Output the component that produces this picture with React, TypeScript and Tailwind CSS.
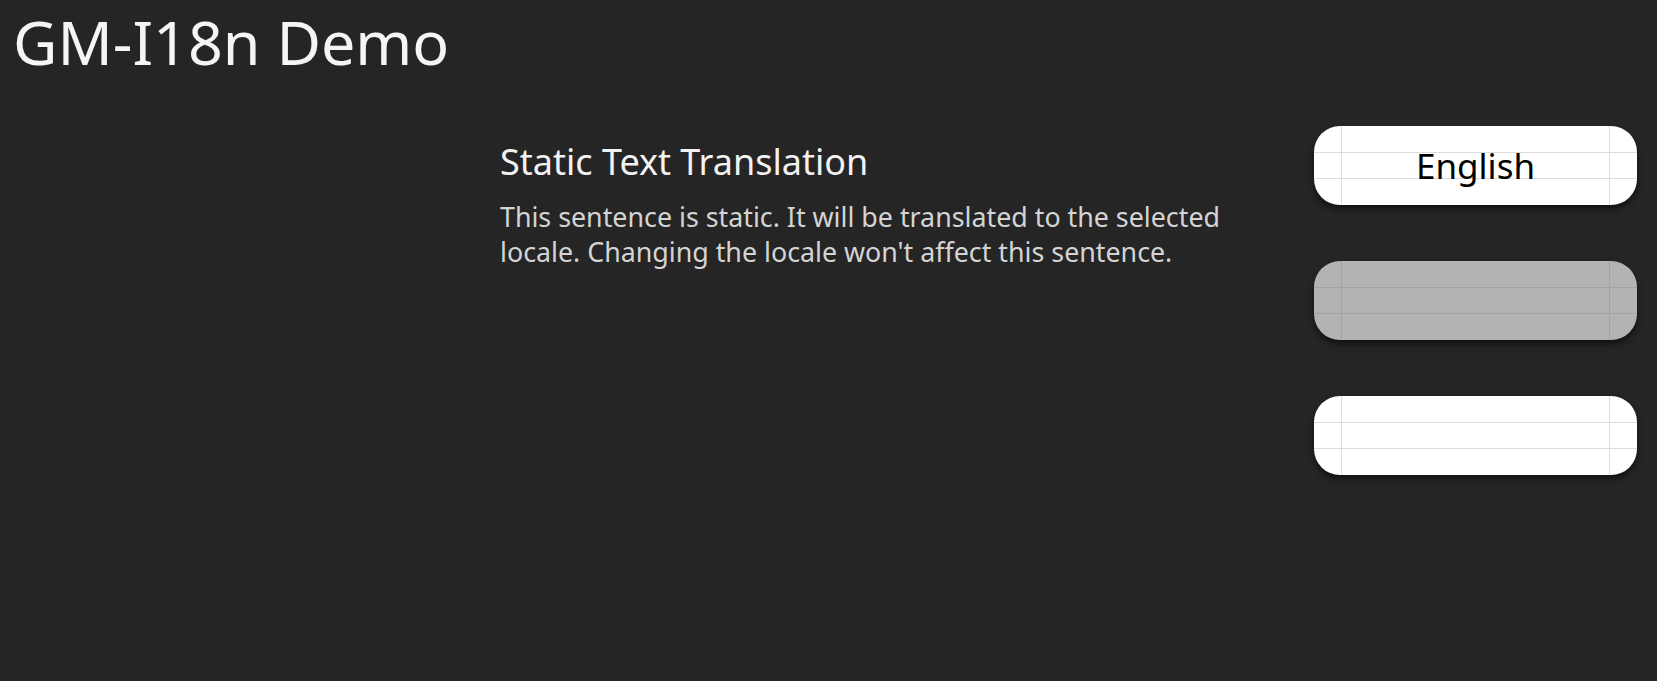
import React from 'react';

/**
 * GM-I18n Demo - static translation page with locale buttons
 */

interface LocaleButtonProps {
  label?: string;
  disabled?: boolean;
}

function LocaleButton({ label, disabled }: LocaleButtonProps) {
  const line = disabled ? 'bg-[#a3a3a3]' : 'bg-[#dcdcdc]';
  return (
    <button
      className={`relative h-[79px] w-[323px] overflow-hidden rounded-[26px] shadow-[0_4px_6px_rgba(0,0,0,0.55)] ${
        disabled ? 'bg-[#b3b3b3]' : 'bg-white'
      }`}
    >
      {/* nine-patch guide lines */}
      <span className={`absolute left-0 right-0 top-[26px] h-px ${line}`} />
      <span className={`absolute left-0 right-0 top-[52px] h-px ${line}`} />
      <span className={`absolute bottom-0 top-0 left-[27px] w-px ${line}`} />
      <span className={`absolute bottom-0 top-0 right-[27px] w-px ${line}`} />
      {label && (
        <span className="relative text-[35px] leading-[44px] text-black">{label}</span>
      )}
    </button>
  );
}

export default function App() {
  return (
    <div
      className="h-[681px] w-full overflow-hidden bg-[#252525]"
      style={{ fontFamily: '"Noto Sans", "Open Sans", sans-serif' }}
    >
      <h1 className="pl-[13px] pt-[1px] text-[61px] leading-[82px] text-[#f5f5f5]">GM-I18n Demo</h1>

      <div className="mt-[43px] flex">
        <div className="ml-[500px] w-[760px] pt-[14px]">
          <h2 className="text-[36px] leading-[44px] text-[#f2f2f2]">Static Text Translation</h2>
          <p className="mt-[15px] text-[26.8px] leading-[35px] text-[#d4d4d4]">
            This sentence is static. It will be translated to the selected locale. Changing the locale won't
            affect this sentence.
          </p>
        </div>

        <div className="ml-[54px] flex flex-col gap-[56px]">
          <LocaleButton label="English" />
          <LocaleButton disabled />
          <LocaleButton />
        </div>
      </div>
    </div>
  );
}
